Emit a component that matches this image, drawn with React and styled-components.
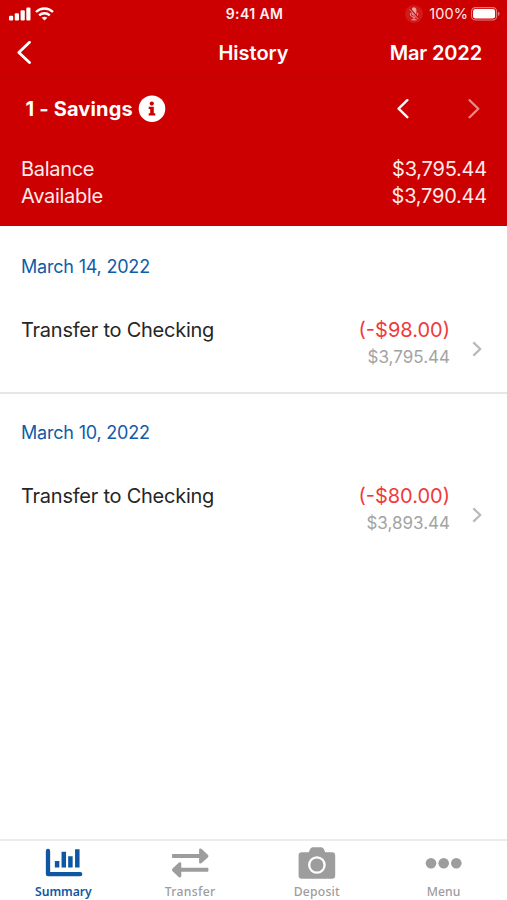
import React from 'react'
import styled, { createGlobalStyle } from 'styled-components'

const transactions = [
  { date: 'March 14, 2022', title: 'Transfer to Checking', amount: '(-$98.00)', balance: '$3,795.44' },
  { date: 'March 10, 2022', title: 'Transfer to Checking', amount: '(-$80.00)', balance: '$3,893.44' },
]

const tabs = [
  { label: 'Summary', Icon: SummaryIcon, active: true, spacing: '-0.05px' },
  { label: 'Transfer', Icon: TransferIcon, spacing: '0.3px' },
  { label: 'Deposit', Icon: DepositIcon, spacing: '0.2px' },
  { label: 'Menu', Icon: MenuIcon, spacing: '0.1px' },
]

function SignalIcon() {
  return (
    <svg width="22" height="14" viewBox="0 0 22 14" fill="currentColor">
      <rect x="0" y="8.8" width="4.2" height="4.8" rx="1.1" />
      <rect x="5.8" y="6.2" width="4.2" height="7.4" rx="1.1" />
      <rect x="11.6" y="3.2" width="4.2" height="10.4" rx="1.1" />
      <rect x="17.3" y="0.6" width="4.2" height="13" rx="1.1" />
    </svg>
  )
}

function WifiIcon() {
  return (
    <svg width="19" height="14" viewBox="0 0 19 14" fill="none" stroke="currentColor" strokeWidth="2.4">
      <path d="M1 5 C5.8 0.4 13.2 0.4 18 5" />
      <path d="M4.2 8.4 C7.2 5.6 11.8 5.6 14.8 8.4" />
      <path d="M9.5 13.4 L6.7 10.7 C8.3 9.4 10.7 9.4 12.3 10.7 Z" fill="currentColor" stroke="none" />
    </svg>
  )
}

function MicOffIcon() {
  return (
    <svg width="18" height="18" viewBox="0 0 18 18" fill="none">
      <circle cx="9" cy="9" r="9" fill="#fff" opacity="0.1" />
      <g stroke="#fff" opacity="0.6" strokeWidth="1">
        <rect x="7.1" y="2.8" width="3.8" height="7.4" rx="1.9" fill="#fff" />
        <path d="M5.3 8 V8.8 C5.3 13.2 12.7 13.2 12.7 8.8 V8 M9 12 V14.6 M6.5 14.8 H11.5" />
      </g>
      <path d="M5 3.8 L13 13.2" stroke="#cc0000" strokeWidth="1.8" />
      <path d="M4.7 4.2 L12.9 13.8" stroke="#fff" opacity="0.6" strokeWidth="0.9" />
    </svg>
  )
}

function BatteryIcon() {
  return (
    <svg width="29" height="14" viewBox="0 0 29 14" fill="none">
      <rect x="0.6" y="0.6" width="25" height="12.4" rx="3.8" stroke="#fff" strokeOpacity="0.5" strokeWidth="1.1" />
      <rect x="2.1" y="2.1" width="22" height="9.4" rx="2.3" fill="#fff" />
      <path d="M27 4.7 C29 5.3 29 8.3 27 8.9 Z" fill="#fff" opacity="0.5" />
    </svg>
  )
}

function BackIcon() {
  return (
    <svg width="14" height="24" viewBox="0 0 14 24" fill="none" stroke="currentColor" strokeWidth="2.8" strokeLinecap="round" strokeLinejoin="round">
      <path d="M12.5 1.3 L1.8 11.4 L12.5 21.5" />
    </svg>
  )
}

function PrevIcon() {
  return (
    <svg width="12" height="20" viewBox="0 0 12 20" fill="none" stroke="currentColor" strokeWidth="2.4" strokeLinecap="round" strokeLinejoin="round">
      <path d="M10.3 1.2 L1.6 9.7 L10.3 18.2" />
    </svg>
  )
}

function NextIcon() {
  return (
    <svg width="12" height="20" viewBox="0 0 12 20" fill="none" stroke="currentColor" strokeOpacity="0.55" strokeWidth="2.3" strokeLinecap="round" strokeLinejoin="round">
      <path d="M1.6 1.2 L10.3 9.7 L1.6 18.2" />
    </svg>
  )
}

function RowChevron() {
  return (
    <svg width="10" height="16" viewBox="0 0 10 16" fill="none" stroke="#b9b9b9" strokeWidth="2.3" strokeLinejoin="round">
      <path d="M1.3 1.4 L8.3 8 L1.3 14.6" />
    </svg>
  )
}

function InfoIcon() {
  return (
    <svg width="28" height="28" viewBox="0 0 28 28">
      <circle cx="14" cy="13.7" r="13.3" fill="#fff" />
      <g fill="#cc0000">
        <circle cx="13.8" cy="8.6" r="2.1" />
        <path d="M10.7 11.7 H15.8 V18.3 H17.3 V20.6 H10.7 V18.3 H12.2 V14 H10.7 Z" />
      </g>
    </svg>
  )
}

function SummaryIcon() {
  return (
    <svg width="40" height="30" viewBox="0 0 40 30" fill="none" stroke="currentColor">
      <path d="M5 3 V26.2 H37.2" strokeWidth="4.3" strokeLinecap="round" strokeLinejoin="round" />
      <path d="M14.1 13 V19.5 M20.8 3.8 V19.5 M27.4 8.2 V19.5 M34.3 1.3 V19.5" strokeWidth="4.5" />
    </svg>
  )
}

function TransferIcon() {
  return (
    <svg width="38" height="30" viewBox="0 -0.5 38 30" fill="currentColor">
      <rect x="1" y="5.6" width="31" height="3.9" rx="0.8" />
      <path d="M28.1 1.3 C28.1 -0.1 29.7 -0.5 30.7 0.5 L36.8 6.2 C37.7 7.1 37.7 8 36.8 8.9 L30.7 14.6 C29.7 15.5 28.1 15.1 28.1 13.8 Z" />
      <rect x="6.4" y="19.3" width="31" height="3.9" rx="0.8" />
      <path d="M10.3 15.1 C10.3 13.7 8.7 13.3 7.7 14.3 L1.6 20 C0.7 20.9 0.7 21.8 1.6 22.7 L7.7 28.4 C8.7 29.3 10.3 28.9 10.3 27.6 Z" />
    </svg>
  )
}

function DepositIcon() {
  return (
    <svg width="38" height="34" viewBox="0 0 38 34">
      <path d="M3.8 6.2 H10.7 L12.2 2.9 Q13 1.2 14.8 1.2 H23.2 Q25 1.2 25.8 2.9 L27.3 6.2 H34 Q37.2 6.2 37.2 9.4 V29.6 Q37.2 32.8 34 32.8 H3.8 Q0.6 32.8 0.6 29.6 V9.4 Q0.6 6.2 3.8 6.2 Z" fill="currentColor" />
      <circle cx="18.9" cy="19" r="7.7" fill="none" stroke="#fff" strokeWidth="2.3" />
    </svg>
  )
}

function MenuIcon() {
  return (
    <svg width="38" height="12" viewBox="0 0 38 12" fill="currentColor">
      <circle cx="6" cy="6.3" r="5.3" />
      <circle cx="18.7" cy="6.3" r="5.3" />
      <circle cx="31.3" cy="6.3" r="5.3" />
    </svg>
  )
}

function App() {
  return (
    <Screen>
      <GlobalStyle />
      <Header>
        <StatusBar>
          <StatusGroup>
            <SignalIcon />
            <WifiIcon />
          </StatusGroup>
          <Clock>9:41 AM</Clock>
          <StatusGroup $end>
            <MicOffIcon />
            <BatteryText>100%</BatteryText>
            <BatteryIcon />
          </StatusGroup>
        </StatusBar>

        <NavBar>
          <BackButton aria-label="Back"><BackIcon /></BackButton>
          <NavTitle>History</NavTitle>
          <NavMonth>Mar 2022</NavMonth>
        </NavBar>

        <AccountRow>
          <AccountName>1 - Savings</AccountName>
          <InfoIcon />
          <Pager>
            <IconButton aria-label="Previous"><PrevIcon /></IconButton>
            <IconButton aria-label="Next"><NextIcon /></IconButton>
          </Pager>
        </AccountRow>

        <Balances>
          <BalanceLine>
            <span>Balance</span>
            <Money>$3,795.44</Money>
          </BalanceLine>
          <BalanceLine>
            <span>Available</span>
            <Money>$3,790.44</Money>
          </BalanceLine>
        </Balances>
      </Header>

      <List>
        {transactions.map((item, i) => (
          <Entry key={i} $divider={i < transactions.length - 1}>
            <EntryDate>{item.date}</EntryDate>
            <EntryRow>
              <EntryTitle>{item.title}</EntryTitle>
              <Amounts>
                <Amount>{item.amount}</Amount>
                <Running>{item.balance}</Running>
              </Amounts>
              <ChevronBox><RowChevron /></ChevronBox>
            </EntryRow>
          </Entry>
        ))}
      </List>

      <TabBar>
        {tabs.map(({ label, Icon, active, spacing }) => (
          <Tab key={label} $active={active}>
            <TabIcon><Icon /></TabIcon>
            <TabLabel $active={active} $spacing={spacing}>{label}</TabLabel>
          </Tab>
        ))}
      </TabBar>
    </Screen>
  )
}

export default App

const GlobalStyle = createGlobalStyle`
  body {
    margin: 0;
  }
  * {
    box-sizing: border-box;
  }
  svg {
    display: block;
    flex-shrink: 0;
  }
`

const Screen = styled.div`
  width: 100%;
  height: 100vh;
  display: flex;
  flex-direction: column;
  overflow: hidden;
  background: #fff;
  font-family: Inter, "Liberation Sans", sans-serif;
`

const Header = styled.header`
  height: 226px;
  flex-shrink: 0;
  background: #cc0000;
  color: #fff;
`

const StatusBar = styled.div`
  display: grid;
  grid-template-columns: 1fr auto 1fr;
  align-items: center;
  height: 27px;
  padding: 0 7px 0 9px;
`

const StatusGroup = styled.div`
  display: flex;
  align-items: center;
  justify-content: ${(p) => (p.$end ? 'flex-end' : 'flex-start')};
  gap: 4px;
`

const Clock = styled.span`
  font-size: 14px;
  font-weight: 600;
  letter-spacing: 0.4px;
  color: #fff0f0;
`

const BatteryText = styled.span`
  margin-left: 2px;
  margin-right: -1px;
  font-size: 14.5px;
  letter-spacing: 0.1px;
  color: #ffe9e9;
`

const NavBar = styled.div`
  display: grid;
  grid-template-columns: 1fr auto 1fr;
  align-items: center;
  height: 52px;
  padding: 0 25px;
  border-bottom: 1px solid #c50000;
`

const IconButton = styled.button`
  display: flex;
  padding: 0;
  border: 0;
  background: none;
  color: inherit;
`

const BackButton = styled(IconButton)`
  margin-left: -8px;
`

const NavTitle = styled.h1`
  margin: 0;
  font-size: 20px;
  font-weight: 600;
`

const NavMonth = styled.span`
  font-size: 20px;
  font-weight: 600;
  letter-spacing: -0.15px;
  text-align: right;
`

const AccountRow = styled.div`
  display: flex;
  align-items: center;
  height: 59px;
  padding: 0 27px 0 25.5px;
`

const AccountName = styled.h2`
  margin: 0 5px 0 0;
  font-size: 20px;
  font-weight: 700;
  letter-spacing: 0.17px;
`

const Pager = styled.div`
  display: flex;
  gap: 59px;
  margin-left: auto;
`

const Balances = styled.div`
  padding: 18px 20px 0 21px;
`

const BalanceLine = styled.div`
  display: flex;
  justify-content: space-between;
  font-size: 20px;
  line-height: 27px;
  letter-spacing: -0.3px;
  color: #ffeaea;
`

const Money = styled.span`
  letter-spacing: -0.22px;
`

const List = styled.main`
  flex: 1;
`

const Entry = styled.section`
  height: ${(p) => (p.$divider ? '168px' : '167px')};
  padding: ${(p) => (p.$divider ? '29px' : '27px')} 25px 0 21px;
  border-bottom: ${(p) => (p.$divider ? '2px solid #e6e6e6' : '0')};
`

const EntryDate = styled.div`
  font-size: 18px;
  line-height: 24px;
  letter-spacing: -0.2px;
  color: #0f5ca8;
`

const EntryRow = styled.div`
  display: flex;
  margin-top: 37px;
`

const EntryTitle = styled.div`
  flex: 1;
  font-size: 20px;
  line-height: 28px;
  letter-spacing: -0.24px;
  color: #262626;
`

const Amounts = styled.div`
  text-align: right;
`

const Amount = styled.div`
  font-size: 20px;
  line-height: 28px;
  color: #f03a3a;
`

const Running = styled.div`
  font-size: 17px;
  line-height: 26px;
  color: #a3a3a3;
`

const ChevronBox = styled.div`
  margin: 25px 0 0 22px;
`

const TabBar = styled.nav`
  display: grid;
  grid-template-columns: repeat(4, 1fr);
  height: 61px;
  flex-shrink: 0;
  border-top: 2px solid #ececec;
`

const Tab = styled.div`
  display: flex;
  flex-direction: column;
  align-items: center;
  color: ${(p) => (p.$active ? '#0f57a3' : '#9d9d9d')};
`

const TabIcon = styled.div`
  display: flex;
  align-items: center;
  height: 34px;
  margin-top: 5px;
`

const TabLabel = styled.span`
  margin-top: 2px;
  font-family: "Noto Sans", "Open Sans", sans-serif;
  font-size: 12.2px;
  line-height: 19px;
  font-weight: ${(p) => (p.$active ? 600 : 500)};
  letter-spacing: ${(p) => p.$spacing};
`
